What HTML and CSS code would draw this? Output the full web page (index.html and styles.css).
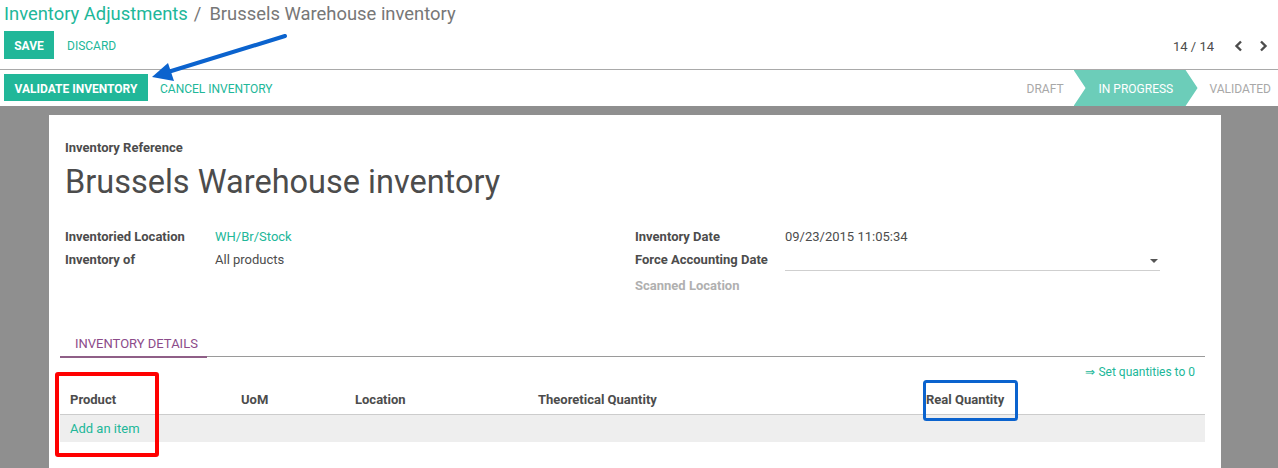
FILE: index.html
```html
<!DOCTYPE html>
<html>
<head>
<meta charset="utf-8">
<link rel="stylesheet" href="styles.css">
</head>
<body>
<div class="page">
  <div class="control-panel">
    <div class="breadcrumb">
      <a class="crumb-link">Inventory Adjustments</a><span class="crumb-sep">/</span><span class="crumb-active">Brussels Warehouse inventory</span>
    </div>
    <div class="cp-row">
      <div class="cp-buttons">
        <button class="btn-primary btn-save">SAVE</button>
        <button class="btn-link">DISCARD</button>
      </div>
      <div class="pager">
        <span class="pager-value">14 / 14</span>
        <span class="pager-btn"><svg width="10" height="12" viewBox="0 0 10 12"><path d="M7 1.5 L2.5 6 L7 10.5" fill="none" stroke="#4c4c4c" stroke-width="2.4"/></svg></span>
        <span class="pager-btn"><svg width="10" height="12" viewBox="0 0 10 12"><path d="M3 1.5 L7.5 6 L3 10.5" fill="none" stroke="#4c4c4c" stroke-width="2.4"/></svg></span>
      </div>
    </div>
  </div>
  <div class="statusbar">
    <div class="status-buttons">
      <button class="btn-primary btn-validate">VALIDATE INVENTORY</button>
      <button class="btn-link">CANCEL INVENTORY</button>
    </div>
    <div class="status-steps">
      <span class="step">DRAFT</span>
      <span class="step step-current">IN PROGRESS</span>
      <span class="step">VALIDATED</span>
    </div>
  </div>
  <div class="sheet-bg">
    <div class="sheet">
      <div class="ref-label">Inventory Reference</div>
      <h1 class="title">Brussels Warehouse inventory</h1>
      <div class="groups">
        <div class="group">
          <div class="field"><span class="f-label">Inventoried Location</span><span class="f-value link">WH/Br/Stock</span></div>
          <div class="field"><span class="f-label">Inventory of</span><span class="f-value">All products</span></div>
        </div>
        <div class="group">
          <div class="field"><span class="f-label">Inventory Date</span><span class="f-value">09/23/2015 11:05:34</span></div>
          <div class="field field-input"><span class="f-label">Force Accounting Date</span><span class="f-input"><span class="caret"></span></span></div>
          <div class="field"><span class="f-label muted">Scanned Location</span></div>
        </div>
      </div>
      <div class="notebook">
        <div class="tabs"><span class="tab active">INVENTORY DETAILS</span></div>
        <div class="set-qty"><span class="set-qty-link">⇒ Set quantities to 0</span></div>
        <div class="table">
          <div class="thead">
            <span>Product</span><span>UoM</span><span>Location</span><span>Theoretical Quantity</span><span>Real Quantity</span>
          </div>
          <div class="trow"><span class="link">Add an item</span></div>
        </div>
      </div>
    </div>
  </div>
  <svg class="annotations" width="1278" height="468" viewBox="0 0 1278 468">
    <line x1="285" y1="36" x2="168" y2="72" stroke="#0b63ce" stroke-width="4" stroke-linecap="round"/>
    <polygon points="152,77 168,63 174,81" fill="#0b63ce"/>
    <rect x="57" y="374" width="100" height="81" fill="none" stroke="#ff0000" stroke-width="4" rx="1"/>
    <rect x="924.5" y="381.5" width="92" height="38" fill="none" stroke="#0b63ce" stroke-width="3" rx="2"/>
  </svg>
</div>
</body>
</html>
```
FILE: styles.css
```css
* { box-sizing: border-box; }
html, body { margin: 0; padding: 0; }
body {
  font-family: Roboto, "Noto Sans", sans-serif;
  color: #4c4c4c;
  background: #ffffff;
  width: 1278px;
  height: 468px;
  overflow: hidden;
}
.page { position: relative; width: 1278px; height: 468px; }

.control-panel {
  height: 70px;
  border-bottom: 1px solid #a9a9a9;
  padding: 0 4px;
}
.breadcrumb {
  height: 28px;
  line-height: 28px;
  font-size: 18.4px;
  white-space: nowrap;
}
.crumb-link { color: #21b799; }
.crumb-sep { color: #777777; margin: 0 8px 0 6px; }
.crumb-active { color: #777777; }

.cp-row {
  margin-top: 3px;
  height: 28px;
  display: flex;
  justify-content: space-between;
  align-items: center;
}
.cp-buttons { display: flex; align-items: center; }
.btn-primary {
  font-family: Roboto, sans-serif;
  background: #21b799;
  color: #ffffff;
  border: none;
  font-weight: 700;
  font-size: 12px;
  padding: 0;
  cursor: pointer;
}
.btn-save { width: 50px; height: 28px; padding-top: 2px; }
.btn-link {
  font-family: Roboto, sans-serif;
  background: none;
  border: none;
  color: #21b799;
  font-size: 12px;
  padding: 2px 0 0 13px;
  height: 28px;
}
.pager {
  display: flex;
  align-items: center;
  font-size: 13px;
  color: #4c4c4c;
  padding-right: 6px;
  padding-top: 2px;
}
.pager-value { margin-right: 12px; }
.pager-btn { display: flex; width: 26px; justify-content: center; }
.pager-btn:last-child { width: 16px; justify-content: flex-end; }

.statusbar {
  height: 36px;
  display: flex;
  justify-content: space-between;
  align-items: flex-start;
  padding-left: 4px;
}
.status-buttons { display: flex; align-items: center; margin-top: 4px; }
.btn-validate { width: 144px; height: 27px; padding-top: 2px; }
.status-buttons .btn-link { padding-left: 12px; height: 27px; }
.status-steps { display: flex; height: 36px; align-items: stretch; }
.step {
  display: flex;
  align-items: center;
  font-size: 12px;
  color: #a8a8a8;
  padding: 2px 10px 0 10px;
}
.step:first-child { padding-right: 10px; }
.step:last-child { padding-left: 12px; padding-right: 7px; }
.step-current {
  background: #6ccdb9;
  color: #ffffff;
  width: 124px;
  padding: 2px 0 0 25px;
  clip-path: polygon(0 0, 112px 0, 124px 50%, 112px 100%, 0 100%, 12px 50%);
}

.sheet-bg {
  background: #8f8f8f;
  height: 362px;
  padding-top: 9px;
  padding-left: 49px;
}
.sheet {
  background: #ffffff;
  width: 1172px;
  height: 353px;
  padding: 23px 16px 0 16px;
}
.ref-label { font-size: 13px; font-weight: 700; line-height: 20px; }
.title {
  margin: 4px 0 0 0;
  font-size: 32.5px;
  font-weight: 400;
  line-height: 40px;
  color: #4c4c4c;
}
.groups {
  margin-top: 23px;
  display: grid;
  grid-template-columns: 570px 570px;
}
.field {
  display: flex;
  align-items: center;
  height: 23px;
  font-size: 13px;
}
.field-input { height: 26px; align-items: flex-start; }
.field-input .f-label { line-height: 24px; }
.f-label { width: 150px; font-weight: 700; flex: none; }
.f-label.muted { color: #b0b0b0; }
.f-value { color: #4c4c4c; }
.link { color: #21b799; }
.f-input {
  width: 375px;
  height: 23px;
  border-bottom: 1px solid #cfcfcf;
  position: relative;
}
.caret {
  position: absolute;
  right: 2px;
  top: 11px;
  width: 0; height: 0;
  border-left: 4px solid transparent;
  border-right: 4px solid transparent;
  border-top: 4px solid #555555;
}

.notebook { margin: 39px 0 0 -5px; }
.tabs {
  height: 21px;
  border-bottom: 1px solid #9a9a9a;
  display: flex;
}
.tab {
  font-size: 13px;
  color: #8c4b8a;
  padding: 0 9px 0 15px;
  line-height: 16px;
  border-bottom: 2px solid #8f5f87;
  height: 22px;
  white-space: nowrap;
}
.set-qty {
  display: flex;
  justify-content: flex-end;
  padding: 7px 10px 0 0;
  height: 26px;
  font-size: 12px;
  line-height: 17px;
}
.set-qty-link { color: #21b799; }
.table { font-size: 13px; }
.thead {
  display: grid;
  grid-template-columns: 171px 114px 183px 388px 1fr;
  height: 32px;
  align-items: end;
  padding-bottom: 7px;
  border-bottom: 1px solid #cccccc;
  font-weight: 700;
}
.thead span { padding-left: 10px; }
.trow {
  background: #eeeeee;
  height: 27px;
  line-height: 27px;
  padding-left: 10px;
}

.annotations { position: absolute; left: 0; top: 0; pointer-events: none; }
```
